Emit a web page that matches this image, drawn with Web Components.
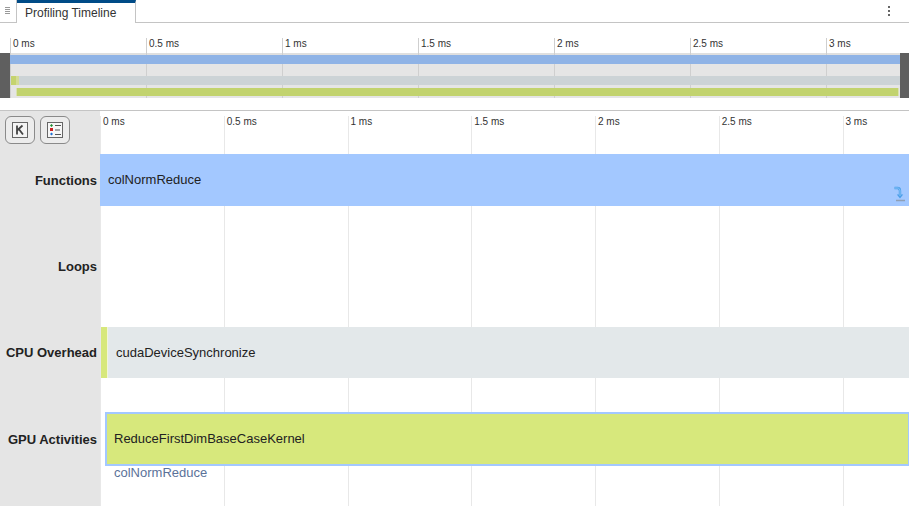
<!DOCTYPE html>
<html>
<head>
<meta charset="utf-8">
<title>Profiling Timeline</title>
<style>
  html, body { margin: 0; height: 100%; background: #fff; overflow: hidden; }
  body { font-family: "Liberation Sans", Arial, sans-serif; display: flex; flex-direction: column; height: 506px; }
</style>
</head>
<body>
<tab-bar title-text="Profiling Timeline"></tab-bar>
<overview-strip></overview-strip>
<timeline-view>
  <track-row slot="rows" label="Functions" height="52">
    <div style="flex:1;background:#a3c8ff;display:flex;align-items:center;padding:0 0 2px 8px;color:#222;position:relative">colNormReduce<jump-icon></jump-icon></div>
  </track-row>
  <track-row slot="rows" label="Loops" height="121"></track-row>
  <track-row slot="rows" label="CPU Overhead" height="51">
    <overhead-bar></overhead-bar>
  </track-row>
  <track-row slot="rows" label="GPU Activities" height="128" label-lift="6">
    <gpu-bar></gpu-bar>
  </track-row>
</timeline-view>

<script>
const TICK_LABELS = ['0 ms', '0.5 ms', '1 ms', '1.5 ms', '2 ms', '2.5 ms', '3 ms'];

class TabBar extends HTMLElement {
  connectedCallback() {
    const shadow = this.attachShadow({ mode: 'open' });
    shadow.innerHTML = `
      <style>
        :host { display: flex; height: 23px; box-sizing: border-box; border-bottom: 1px solid #c4c4c4; flex: none; }
        .grip { width: 17px; display: flex; justify-content: center; padding: 7px 1px 0 0; box-sizing: border-box; border-right: 1px solid #c4c4c4; }
        .grip i { display: block; width: 5px; height: 8px; background: repeating-linear-gradient(#999 0 1px, #fff 1px 2px); }
        .tab { width: 119px; height: 23px; box-sizing: border-box; border-top: 3px solid #004b87; border-right: 1px solid #c4c4c4; background: #fff;
          font-size: 12px; color: #333; padding: 3px 0 0 8px; white-space: nowrap; }
        .menu { margin-left: auto; width: 41px; display: flex; flex-direction: column; align-items: center; gap: 2px; padding-top: 6px; box-sizing: border-box; }
        .menu i { display: block; width: 2px; height: 2px; background: #666; }
      </style>
      <div class="grip"><i></i></div>
      <div class="tab">${this.getAttribute('title-text')}</div>
      <div class="menu"><i></i><i></i><i></i></div>
    `;
  }
}
customElements.define('tab-bar', TabBar);

class TimeRuler extends HTMLElement {
  connectedCallback() {
    const shadow = this.attachShadow({ mode: 'open' });
    const step = this.getAttribute('step');
    const ticks = TICK_LABELS.map((t) => `<div class="tick" style="width:${step}px"><span>${t}</span></div>`).join('');
    shadow.innerHTML = `
      <style>
        :host { display: flex; height: 100%; overflow: hidden; color: var(--ruler-color, #333); font-size: 10px; }
        .tick { flex: none; box-sizing: border-box; border-left: 1px solid var(--tick-color, #ddd); padding-left: 2px; line-height: 12px; white-space: nowrap; }
        span { display: block; }
      </style>
      ${ticks}
    `;
  }
}
customElements.define('time-ruler', TimeRuler);

class OverviewStrip extends HTMLElement {
  connectedCallback() {
    const shadow = this.attachShadow({ mode: 'open' });
    shadow.innerHTML = `
      <style>
        :host { display: block; height: 88px; box-sizing: border-box; border-bottom: 1px solid #c4c4c4; flex: none; position: relative; padding-top: 15px; }
        .frame { position: relative; height: 60px; padding-left: 10px; overflow: hidden; }
        .track { position: absolute; left: 0; right: 0; top: 30px; height: 45px; }
        .track.base { background: linear-gradient(#dfdfdf 2px, #e5e5e5 2px); }
        .handle { position: absolute; top: 0; bottom: 0; width: 10px; background: #5f5f5f; }
        .bar { position: absolute; height: 9px; }
        time-ruler { --tick-color: #cfcfcf; --ruler-color: #333; }
      </style>
      <div class="track base"></div>
      <div class="frame"><time-ruler step="136"></time-ruler></div>
      <div class="track">
        <div class="bar" style="left:10px;right:9px;top:2px;background:#8fb3e6"></div>
        <div class="bar" style="left:10px;right:9px;top:23px;background:#ccd3d6"></div>
        <div class="bar" style="left:11px;width:8px;top:23px;background:linear-gradient(to right,#c5d36f 5px,#d3dc95 5px)"></div>
        <div class="bar" style="left:16px;right:10px;top:35px;height:8px;box-sizing:border-box;padding:0;background:#c2d36e;border-left:1px solid #dbe2b0;border-right:1px solid #dbe2b0"></div>
        <div class="handle" style="left:0"></div>
        <div class="handle" style="right:0;width:9px"></div>
      </div>
    `;
  }
}
customElements.define('overview-strip', OverviewStrip);

class TimelineView extends HTMLElement {
  connectedCallback() {
    const shadow = this.attachShadow({ mode: 'open' });
    shadow.innerHTML = `
      <style>
        :host { display: flex; flex-direction: column; flex: 1; min-height: 0; }
        .head { display: flex; height: 43px; flex: none; }
        .tools { width: 100px; flex: none; background: #e5e5e5; display: flex; gap: 5px; padding: 5px 0 0 5px; box-sizing: border-box; }
        button { width: 30px; height: 28px; padding: 0; box-sizing: border-box; background: #ececec; border: 1px solid #8a8a8a; border-radius: 6px; display: flex; align-items: center; justify-content: center; }
        .ruler { flex: 1; overflow: hidden; padding-top: 5px; --tick-color: #e8e8e8; }
        .rows { flex: 1; display: flex; flex-direction: column; }
      </style>
      <div class="head">
        <div class="tools">
          <button>
            <svg width="16" height="16" viewBox="0 0 16 16">
              <rect x="0.5" y="0.5" width="15" height="15" fill="#f4f4f4" stroke="#666"/>
              <path d="M5 3.5v9M5 8.5 10.5 3.5M6.8 7 11 12.5" fill="none" stroke="#444" stroke-width="1.8"/>
            </svg>
          </button>
          <button>
            <svg width="16" height="16" viewBox="0 0 16 16">
              <rect x="0.5" y="0.5" width="15" height="15" fill="#f7f7f7" stroke="#666"/>
              <path d="M4.5 2 6 3.5 4.5 5 3 3.5z" fill="#1a8a2e"/>
              <rect x="3" y="6" width="3" height="3" fill="#c22"/>
              <path d="M4.5 10.5 6 12 4.5 13.5 3 12z" fill="#1f6fd0"/>
              <path d="M8 3.5h6M8 8h5M8 12.5h6" stroke="#555"/>
            </svg>
          </button>
        </div>
        <div class="ruler"><time-ruler step="123.75"></time-ruler></div>
      </div>
      <div class="rows"><slot name="rows"></slot></div>
    `;
  }
}
customElements.define('timeline-view', TimelineView);

class TrackRow extends HTMLElement {
  connectedCallback() {
    const shadow = this.attachShadow({ mode: 'open' });
    const lift = this.getAttribute('label-lift') || 0;
    shadow.innerHTML = `
      <style>
        :host { display: flex; height: ${this.getAttribute('height')}px; flex: none; }
        .label { width: 100px; flex: none; box-sizing: border-box; background: #e5e5e5; display: flex; align-items: center; justify-content: flex-end; padding: 0 3px ${lift}px 0;
          font-size: 13px; font-weight: bold; color: #222; white-space: nowrap; }
        .lane { flex: 1; position: relative; display: flex; font-size: 13px; min-width: 0; }
        .grid { position: absolute; inset: 0; display: flex; overflow: hidden; }
        .grid i { display: block; flex: none; width: 123.75px; box-sizing: border-box; border-left: 1px solid #e8e8e8; }
        .content { position: relative; flex: 1; display: flex; min-width: 0; }
      </style>
      <div class="label">${this.getAttribute('label')}</div>
      <div class="lane">
        <div class="grid">${'<i></i>'.repeat(7)}</div>
        <div class="content"><slot></slot></div>
      </div>
    `;
  }
}
customElements.define('track-row', TrackRow);

class OverheadBar extends HTMLElement {
  connectedCallback() {
    const shadow = this.attachShadow({ mode: 'open' });
    shadow.innerHTML = `
      <style>
        :host { display: flex; flex: 1; margin-left: 1px; background: #e3e8ea; color: #222; align-items: center; }
        .stub { align-self: stretch; width: 6px; background: #d7e87c; border-right: 1px solid #f2f6d8; flex: none; }
        span { margin-left: 8px; }
      </style>
      <div class="stub"></div><span>cudaDeviceSynchronize</span>
    `;
  }
}
customElements.define('overhead-bar', OverheadBar);

class GpuBar extends HTMLElement {
  connectedCallback() {
    const shadow = this.attachShadow({ mode: 'open' });
    shadow.innerHTML = `
      <style>
        :host { display: block; flex: 1; padding: 34px 0 0 5px; box-sizing: border-box; min-width: 0; }
        .bar { height: 54px; box-sizing: border-box; border: 2px solid #a3c8ff; border-right-width: 1px; background: #d7e87c; color: #222; display: flex; align-items: center; padding: 0 0 2px 7px; }
        .sub { color: #5b7299; padding-left: 9px; line-height: 15px; margin-top: -1px; }
      </style>
      <div class="bar">ReduceFirstDimBaseCaseKernel</div>
      <div class="sub">colNormReduce</div>
    `;
  }
}
customElements.define('gpu-bar', GpuBar);

class JumpIcon extends HTMLElement {
  connectedCallback() {
    const shadow = this.attachShadow({ mode: 'open' });
    shadow.innerHTML = `
      <style>
        :host { position: absolute; right: 3px; bottom: 3px; width: 12px; height: 17px; display: block; }
        svg { display: block; }
      </style>
      <svg width="12" height="17" viewBox="0 0 12 17">
        <path d="M0.5 2H3.5C5.5 2 6 3.5 6 5V9" fill="none" stroke="#4a9ee8" stroke-width="2.4"/>
        <path d="M2.8 8.5H9.2L6 12.5z" fill="#4a9ee8"/>
        <path d="M1 2H3.5C5.5 2 6 3.5 6 5V10" fill="none" stroke="#9ccfff" stroke-width="0.8"/>
        <path d="M2 14.5H11" stroke="#8f9fb5" stroke-width="1.5"/>
      </svg>
    `;
  }
}
customElements.define('jump-icon', JumpIcon);
</script>
</body>
</html>
